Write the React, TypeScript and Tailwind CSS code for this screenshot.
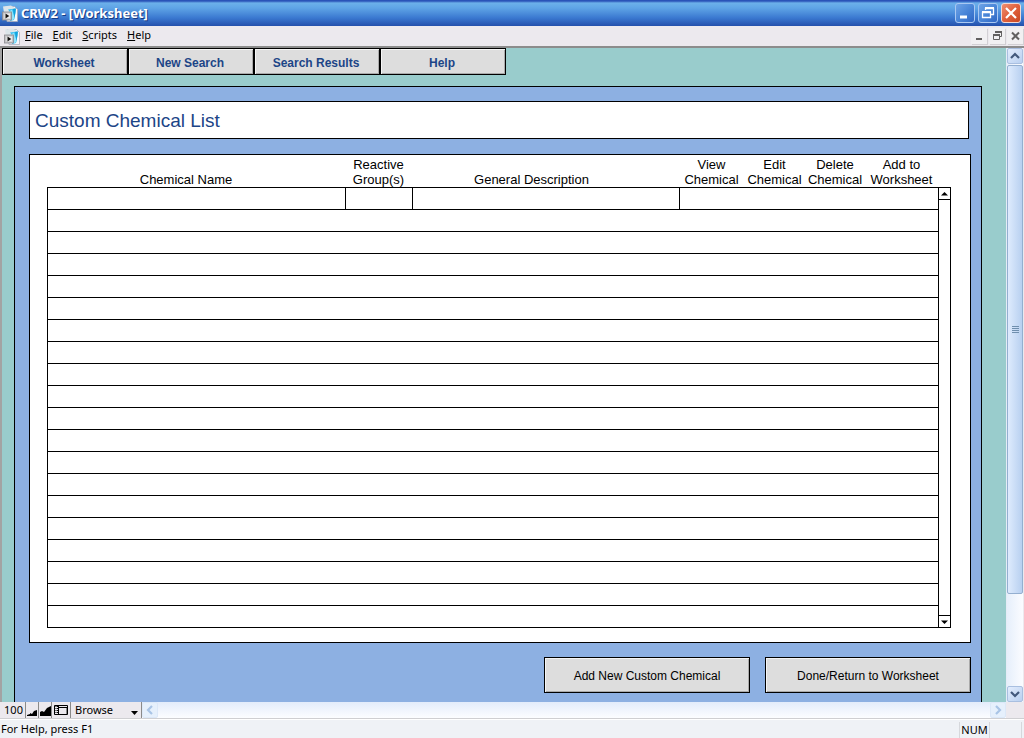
import type { ReactNode } from "react";

const tabs = ["Worksheet", "New Search", "Search Results", "Help"];
const menus = ["File", "Edit", "Scripts", "Help"];
const actions = [
  ["View", "Chemical"],
  ["Edit", "Chemical"],
  ["Delete", "Chemical"],
  ["Add to", "Worksheet"],
];
const emptyRows = Array.from({ length: 19 }, (_, i) => i);

function AppIcon() {
  return (
    <svg width="16" height="17" viewBox="0 0 16 17" className="shrink-0" aria-hidden="true">
      <path d="M3 1.500h9.500l3 3v12H5z" fill="#f7f7fa" stroke="#a6a8b4" strokeWidth="0.700" />
      <path d="M1 1.500l8-1 5 3.500-4 3-8 1z" fill="#dce5ea" />
      <path d="M6 4.500l7.500-1v4L12 15l-4 1V7z" fill="#35bff0" />
      <path d="M7 6.500l3-2 3 9-3 2z" fill="#8fe3fb" />
      <path d="M11 4l3-0.500-1.500 10z" fill="#12a3dd" />
      <rect x="0.500" y="7" width="9" height="8" fill="#c4c4c6" stroke="#8b8b90" strokeWidth="0.800" />
      <rect x="2.500" y="8.500" width="5.500" height="5" fill="#ededed" />
      <path d="M3.500 8.500v5l3.800-2.500z" fill="#111" />
    </svg>
  );
}

function MinimizeGlyph() {
  return (
    <svg width="16" height="16" viewBox="0 0 16 16" fill="none" stroke="currentColor" aria-hidden="true">
      <path d="M3 12h7" strokeWidth="3" />
    </svg>
  );
}

function RestoreGlyph() {
  return (
    <svg width="16" height="16" viewBox="0 0 16 16" fill="none" stroke="currentColor" aria-hidden="true">
      <path d="M5.500 5V3.500h8v6H11" strokeWidth="1.300" />
      <path d="M5 3h9" strokeWidth="2" />
      <path d="M2.500 7.500h8v5h-8z" strokeWidth="1.300" />
      <path d="M2 7h9" strokeWidth="2" />
    </svg>
  );
}

function CloseGlyph() {
  return (
    <svg width="16" height="16" viewBox="0 0 16 16" fill="none" stroke="currentColor" aria-hidden="true">
      <path d="M3 3l10 10M13 3L3 13" strokeWidth="2.200" />
    </svg>
  );
}

function MenuMinimizeGlyph() {
  return (
    <svg width="16" height="16" viewBox="0 0 16 16" fill="none" stroke="currentColor" aria-hidden="true">
      <path d="M5 11h6" strokeWidth="2" />
    </svg>
  );
}

function MenuRestoreGlyph() {
  return (
    <svg width="16" height="16" viewBox="0 0 16 16" fill="none" stroke="currentColor" aria-hidden="true">
      <path d="M6.500 5V3.500h6v5H11" />
      <path d="M6 4h7M4 7h7" strokeWidth="2" />
      <path d="M4.500 6.500h6v5h-6z" />
    </svg>
  );
}

function MenuCloseGlyph() {
  return (
    <svg width="16" height="16" viewBox="0 0 16 16" fill="none" stroke="currentColor" aria-hidden="true">
      <path d="M5 4.500l7 7M12 4.500l-7 7" strokeWidth="2" />
    </svg>
  );
}

function CaptionButton({ label, close, children }: { label: string; close?: boolean; children: ReactNode }) {
  return (
    <button
      type="button"
      aria-label={label}
      className={
        close
          ? "flex size-5 items-center justify-center rounded-[3px] border border-[#f3d9d4] bg-gradient-to-br from-[#ee8f70] via-[#e0603c] to-[#c94722] text-white"
          : "flex size-5 items-center justify-center rounded-[3px] border border-[#a9c8f2] bg-gradient-to-br from-[#6ea3e6] via-[#4a86d8] to-[#2f66c4] text-white"
      }
    >
      {children}
    </button>
  );
}

function ScrollButton({ label, d, disabled }: { label: string; d: string; disabled?: boolean }) {
  return (
    <button
      type="button"
      aria-label={label}
      className={
        disabled
          ? "flex size-4 shrink-0 items-center justify-center rounded-[2px] border border-[#dce8f8] bg-[#e6f0fc] text-[#a9c4e6]"
          : "flex size-4 shrink-0 items-center justify-center rounded-[2px] border border-[#a9bfe0] bg-gradient-to-br from-[#e3edfd] to-[#b9d0f0] text-[#43597c]"
      }
    >
      <svg width="10" height="10" viewBox="0 0 10 10" fill="none" stroke="currentColor" strokeWidth="2.200">
        <path d={d} />
      </svg>
    </button>
  );
}

function ListScrollButton({ label, d }: { label: string; d: string }) {
  return (
    <button type="button" aria-label={label} className="flex h-[11px] w-full items-center justify-center">
      <svg width="7" height="4" viewBox="0 0 7 4" fill="#000">
        <path d={d} />
      </svg>
    </button>
  );
}

function ChemicalTable() {
  return (
    <div className="flex border border-black bg-white pr-[19px] pb-[14px] pl-[17px]">
      <table className="min-w-0 flex-1 table-fixed border-separate border-spacing-0 text-[13px] leading-[15px]">
        <colgroup>
          <col />
          <col className="w-[67px]" />
          <col className="w-[267px]" />
          <col className="w-[65px]" />
          <col className="w-[61px]" />
          <col className="w-[60px]" />
          <col className="w-[73px]" />
        </colgroup>
        <thead>
          <tr className="h-[33px]">
            <th className="border-b border-black p-0 pr-5 align-bottom font-normal">Chemical Name</th>
            <th className="border-b border-black p-0 align-bottom font-normal">
              Reactive
              <br />
              Group(s)
            </th>
            <th className="border-b border-black p-0 pr-7 align-bottom font-normal">General Description</th>
            {actions.map(([verb, noun]) => (
              <th key={verb} className="border-b border-black p-0 align-bottom font-normal">
                {verb}
                <br />
                {noun}
              </th>
            ))}
          </tr>
        </thead>
        <tbody>
          <tr className="h-[22px]">
            <td className="border-b border-l border-black p-0" />
            <td className="border-b border-l border-black p-0" />
            <td className="border-b border-l border-black p-0" />
            <td colSpan={4} className="border-b border-l border-black p-0" />
          </tr>
          {emptyRows.map((row) => (
            <tr key={row} className="h-[22px]">
              <td colSpan={7} className="border-b border-l border-black p-0" />
            </tr>
          ))}
        </tbody>
      </table>
      <div className="mt-8 flex w-[13px] shrink-0 flex-col border border-black">
        <ListScrollButton label="Scroll list up" d="M0 3.500h7L3.500 0z" />
        <div className="flex-1 border-y border-black" />
        <ListScrollButton label="Scroll list down" d="M0 0.500h7L3.500 4z" />
      </div>
    </div>
  );
}

function ActionButton({ children }: { children: ReactNode }) {
  return (
    <button
      type="button"
      className="h-9 w-[206px] border border-black bg-[#dddddd] pt-[2px] text-[12px] shadow-[inset_1px_1px_0_#f5f5f5,inset_-1px_-1px_0_#aaaaaa]"
    >
      {children}
    </button>
  );
}

export default function App() {
  return (
    <div className="flex h-screen flex-col overflow-hidden bg-[#ece9ee] font-['Liberation_Sans',Arial,sans-serif] text-black">
      <header className="flex h-[26px] shrink-0 items-center bg-[linear-gradient(#2a53b8_0px,#2a53b8_1px,#6cb0ea_3px,#5fa4e6_8px,#3a78d0_18px,#2450ac_26px)] pr-[3px] pl-[2px]">
        <AppIcon />
        <h1 className="ml-[3px] flex-1 pt-px font-['Noto_Sans',sans-serif] text-[13px] font-bold text-white [text-shadow:1px_1px_0_#173a83]">
          CRW2 - [Worksheet]
        </h1>
        <div className="flex gap-[3px]">
          <CaptionButton label="Minimize">
            <MinimizeGlyph />
          </CaptionButton>
          <CaptionButton label="Restore">
            <RestoreGlyph />
          </CaptionButton>
          <CaptionButton label="Close" close>
            <CloseGlyph />
          </CaptionButton>
        </div>
      </header>

      <nav className="flex h-5 shrink-0 items-center pr-px pl-1 font-['Noto_Sans',sans-serif] text-[11px]">
        <AppIcon />
        <div className="ml-[5px] flex flex-1 gap-[10px] pb-px">
          {menus.map((menu) => (
            <button key={menu} type="button">
              <u>{menu[0]}</u>
              {menu.slice(1)}
            </button>
          ))}
        </div>
        <div className="flex gap-[2px] text-[#626060]">
          {[
            { label: "Minimize worksheet", glyph: <MenuMinimizeGlyph /> },
            { label: "Restore worksheet", glyph: <MenuRestoreGlyph /> },
            { label: "Close worksheet", glyph: <MenuCloseGlyph /> },
          ].map(({ label, glyph }) => (
            <button
              key={label}
              type="button"
              aria-label={label}
              className="flex size-4 items-center justify-center bg-[#f1f0f2] shadow-[1px_1px_0_#d2d0d4]"
            >
              {glyph}
            </button>
          ))}
        </div>
      </nav>

      <div className="flex min-h-0 flex-1 border-t-2 border-[#8c8c8c]">
        <main className="flex min-w-0 flex-1 flex-col overflow-hidden border-l-2 border-[#a3a3a3] bg-[#99cccc]">
          <div className="flex shrink-0">
            {tabs.map((tab) => (
              <button
                key={tab}
                type="button"
                className="h-[27px] w-[126px] border border-black bg-[#dddddd] pt-[2px] pr-[2px] text-[12px] font-bold text-[#1c4587] shadow-[inset_1px_1px_0_#f5f5f5,inset_-1px_-1px_0_#aaaaaa]"
              >
                {tab}
              </button>
            ))}
          </div>
          <section className="mt-[11px] mr-6 ml-3 flex-1 border border-b-0 border-black bg-[#8db0e2] pt-[14px] pr-[10px] pl-[14px]">
            <h2 className="mr-[2px] mb-[15px] flex h-[38px] items-center border border-black bg-white px-[5px] pt-[2px] text-[19px] text-[#1c4587]">
              Custom Chemical List
            </h2>
            <ChemicalTable />
            <div className="mt-[14px] flex justify-end gap-[15px]">
              <ActionButton>Add New Custom Chemical</ActionButton>
              <ActionButton>Done/Return to Worksheet</ActionButton>
            </div>
          </section>
        </main>
        <div className="mr-px flex w-[17px] shrink-0 flex-col items-center border-l border-[#e4ecf6] bg-gradient-to-r from-[#e6effb] to-[#fbfcff]">
          <ScrollButton label="Scroll up" d="M1 7l4-4 4 4" />
          <div className="mt-px flex w-4 grow-[85] flex-col items-center justify-center gap-px rounded-[2px] border border-[#94afd0] bg-gradient-to-r from-[#deebfd] to-[#b8d0f0]">
            <div className="h-px w-[7px] bg-[#6f8fae]" />
            <div className="h-px w-[7px] bg-[#6f8fae]" />
            <div className="h-px w-[7px] bg-[#6f8fae]" />
            <div className="h-px w-[7px] bg-[#6f8fae]" />
          </div>
          <div className="grow-[15]" />
          <ScrollButton label="Scroll down" d="M1 3l4 4 4-4" />
        </div>
      </div>

      <div className="flex h-[17px] shrink-0 items-center border-b border-[#cfcfd2] pl-[2px] font-['Noto_Sans',sans-serif] text-[11px] leading-4">
        <button type="button" className="h-4 w-6 border-r border-[#8a8a8a] text-center">
          100
        </button>
        <button type="button" aria-label="Zoom out" className="flex h-4 w-[13px] items-end justify-center border-r border-[#8a8a8a] pb-[2px]">
          <svg width="10" height="6" viewBox="0 0 10 6">
            <path d="M0 6V5l3-1V3l2 1 2-3 3-1v6z" />
          </svg>
        </button>
        <button type="button" aria-label="Zoom in" className="flex h-4 w-[13px] items-end justify-center border-r border-[#8a8a8a] pb-[2px]">
          <svg width="11" height="10" viewBox="0 0 11 10">
            <path d="M0 10V6l2-1 2 1 3-4 4-2v10z" />
          </svg>
        </button>
        <button type="button" aria-label="Toggle status area" className="flex h-4 w-[19px] items-center justify-center border-r border-[#8a8a8a]">
          <svg width="14" height="10" viewBox="0 0 14 10" fill="none" stroke="#000">
            <path d="M0.500 0.500h13v9h-13zM4.500 0.500v9M4.500 2.500h9" />
            <path d="M2 1v8M3.500 1v8" strokeDasharray="1 1" />
            <path d="M12.500 3v6" stroke="#888" />
          </svg>
        </button>
        <div className="relative h-4 w-[71px] border-r border-[#8a8a8a]">
          <select aria-label="Mode" defaultValue="Browse" className="h-4 w-full appearance-none pl-1 outline-none">
            <option>Browse</option>
            <option>Find</option>
          </select>
          <svg width="7" height="4" viewBox="0 0 7 4" className="pointer-events-none absolute right-[3px] bottom-[3px]">
            <path d="M0 0h7L3.500 4z" />
          </svg>
        </div>
        <div className="flex h-4 flex-1 bg-gradient-to-b from-[#e3ecfb] to-[#fcfdff]">
          <ScrollButton label="Scroll left" d="M7 1L3 5l4 4" disabled />
          <div className="flex-1" />
          <ScrollButton label="Scroll right" d="M3 1l4 4-4 4" disabled />
        </div>
        <div className="w-[18px]" />
      </div>

      <footer className="flex h-[19px] shrink-0 items-center justify-between border-t border-white bg-[#eff2f6] pt-px pr-[2px] pl-px font-['Noto_Sans',sans-serif] text-[11px]">
        <span>For Help, press F1</span>
        <div className="flex">
          <span className="w-[31px] border-x border-[#d6d8dc] text-center leading-4">NUM</span>
          <span className="w-[32px] border-r border-[#d6d8dc]" />
        </div>
      </footer>
    </div>
  );
}
